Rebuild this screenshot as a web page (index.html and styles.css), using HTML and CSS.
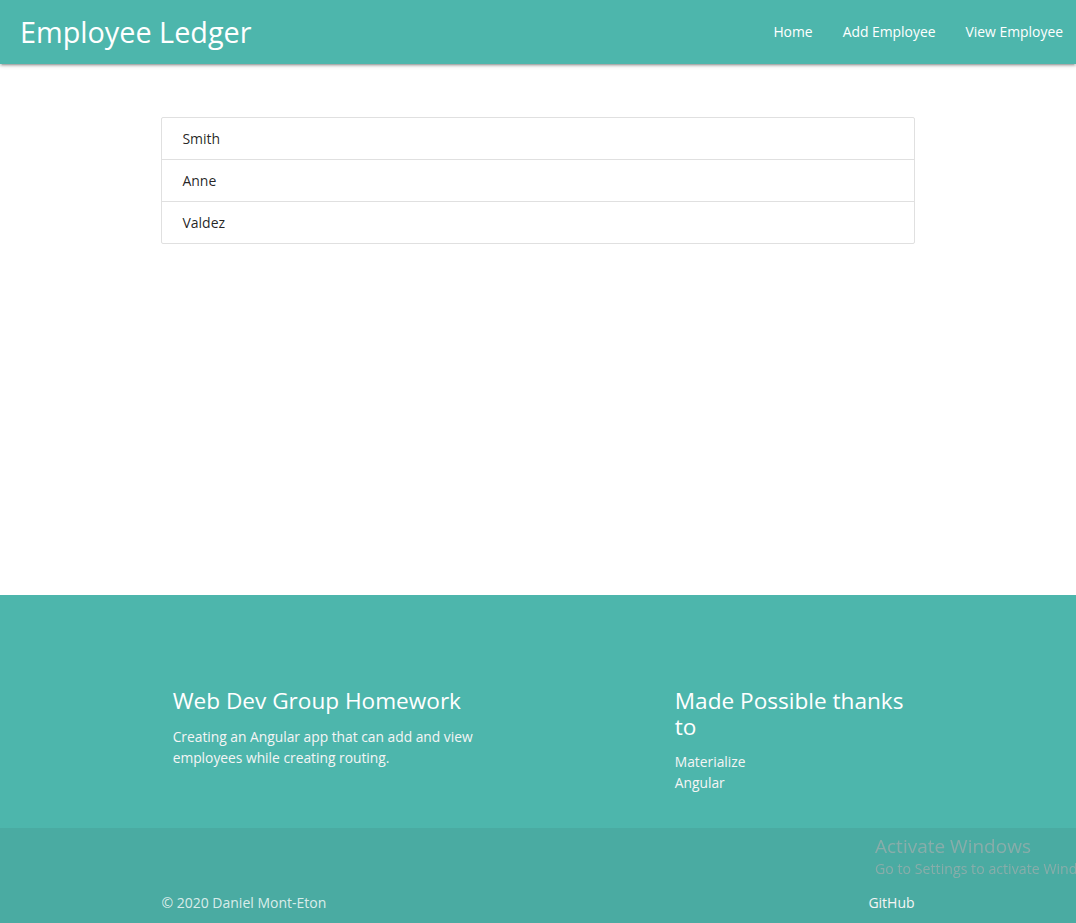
FILE: index.html
```html
<!DOCTYPE html>
<html lang="en">
<head>
<meta charset="utf-8">
<title>Employee Ledger</title>
<link rel="stylesheet" href="styles.css">
</head>
<body>
<header class="navbar">
  <a class="brand" href="#">Employee Ledger</a>
  <ul class="nav-links">
    <li><a href="#">Home</a></li>
    <li><a href="#">Add Employee</a></li>
    <li><a href="#">View Employee</a></li>
  </ul>
</header>
<main class="content">
  <ul class="collection">
    <li class="collection-item">Smith</li>
    <li class="collection-item">Anne</li>
    <li class="collection-item">Valdez</li>
  </ul>
</main>
<footer class="page-footer">
  <div class="footer-main">
    <div class="container footer-row">
      <div class="col-left">
        <h5 class="footer-title">Web Dev Group Homework</h5>
        <p class="footer-text">Creating an Angular app that can add and view employees while creating routing.</p>
      </div>
      <div class="col-right">
        <h5 class="footer-title">Made Possible thanks to</h5>
        <ul class="footer-list">
          <li>Materialize</li>
          <li>Angular</li>
        </ul>
      </div>
    </div>
  </div>
  <div class="footer-copyright">
    <div class="container copyright-row">
      <span>© 2020 Daniel Mont-Eton</span>
      <a class="github" href="#">GitHub</a>
    </div>
  </div>
</footer>
<div class="watermark">
  <div class="wm-title">Activate Windows</div>
  <div class="wm-sub">Go to Settings to activate Windows.</div>
</div>
</body>
</html>
```
FILE: styles.css
```css
* { box-sizing: border-box; }
html, body { margin: 0; padding: 0; }
body {
  font-family: "Open Sans", "Noto Sans", sans-serif;
  font-size: 14px;
  line-height: 1.5;
  color: rgba(0,0,0,0.87);
  background: #fff;
  overflow: hidden;
}
a { text-decoration: none; color: inherit; }
ul { list-style: none; margin: 0; padding: 0; }

.navbar {
  height: 64px;
  background: #4db6ac;
  display: flex;
  align-items: center;
  justify-content: space-between;
  padding-left: 20px;
  color: #fff;
  position: relative;
  z-index: 2;
  box-shadow: 0 2px 2px 0 rgba(0,0,0,.14), 0 3px 1px -2px rgba(0,0,0,.12), 0 1px 5px 0 rgba(0,0,0,.2);
}
.brand {
  font-size: 28.8px;
  line-height: 64px;
  color: #fff;
}
.nav-links { display: flex; height: 64px; margin-right: -2px; }
.nav-links a {
  display: block;
  padding: 0 15px;
  line-height: 64px;
  font-size: 13.9px;
  color: #fff;
}

.content {
  height: 531px;
  padding-top: 53px;
}
.collection {
  width: 70%;
  margin: 0 auto;
  border: 1px solid #e0e0e0;
  border-radius: 2px;
}
.collection-item {
  padding: 10px 20px;
  line-height: 21px;
  border-bottom: 1px solid #e0e0e0;
  color: rgba(0,0,0,0.87);
}
.collection-item:last-child { border-bottom: none; }

.page-footer { background: #4db6ac; color: #fff; }
.container { width: 70%; margin: 0 auto; }
.footer-main { padding-top: 93px; padding-bottom: 35px; }
.footer-row { display: flex; }
.col-left { width: 50%; padding: 0 11.25px; }
.col-right { width: 33.333%; margin-left: 16.667%; padding: 0 8px 0 11.25px; }
.footer-title {
  font-size: 22.6px;
  font-weight: 400;
  line-height: 1.13;
  margin: 0 0 12px 0;
  color: #fff;
}
.footer-text, .footer-list {
  margin: 0;
  color: #f5f5f5;
  font-size: 13.8px;
  line-height: 21px;
}
.footer-copyright {
  background: rgba(51,51,51,0.08);
  height: 95px;
  padding-top: 65px;
  color: rgba(255,255,255,0.8);
  line-height: 20px;
}
.copyright-row { display: flex; justify-content: space-between; }
.github { color: #f5f5f5; }

.watermark {
  position: fixed;
  left: 875px;
  top: 833px;
  color: rgba(175,175,175,0.62);
  white-space: nowrap;
  font-family: "Open Sans", sans-serif;
}
.wm-title { font-size: 19px; line-height: 26px; }
.wm-sub { font-size: 14.2px; line-height: 20px; }
```
